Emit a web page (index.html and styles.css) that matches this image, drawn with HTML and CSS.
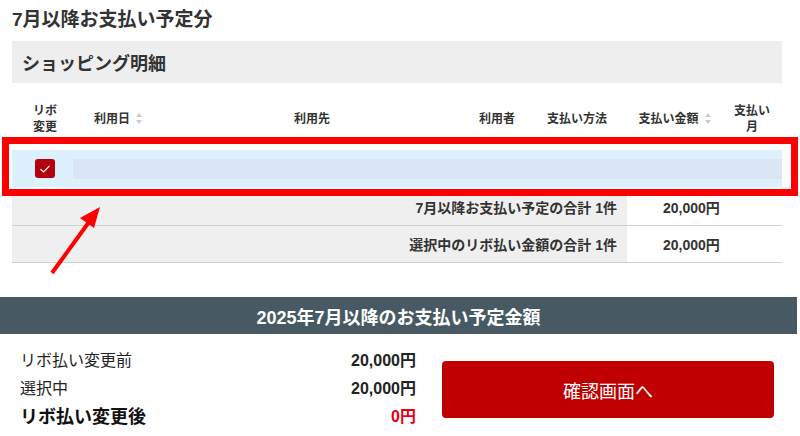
FILE: index.html
```html
<!DOCTYPE html>
<html lang="ja">
<head>
    <meta charset="UTF-8">
    <meta name="viewport" content="width=device-width, initial-scale=1.0">
    <title>お支払い予定</title>
    <link rel="stylesheet" href="styles.css">
</head>
<body>

<div class="page">
    <h2 class="title">7月以降お支払い予定分</h2>
    <div class="section-head">ショッピング明細</div>

    <table class="detail">
        <colgroup>
            <col style="width:66px">
            <col style="width:79px">
            <col style="width:310px">
            <col style="width:60px">
            <col style="width:100px">
            <col style="width:95px">
            <col style="width:60px">
        </colgroup>
        <thead>
            <tr>
                <th>リボ<br>変更</th>
                <th class="left">利用日<span class="sort"></span></th>
                <th>利用先</th>
                <th>利用者</th>
                <th>支払い方法</th>
                <th>支払い金額<span class="sort"></span></th>
                <th>支払い<br>月</th>
            </tr>
        </thead>
        <tbody>
            <tr class="data">
                <td colspan="7">
                    <div class="row-sel">
                        <span class="check">
                            <svg width="12" height="10" viewBox="0 0 12 10"><path d="M1.5 5.2 L4.6 8 L10.5 1.8" fill="none" stroke="#fff" stroke-width="1.2"/></svg>
                        </span>
                        <span class="masked"></span>
                    </div>
                </td>
            </tr>
            <tr class="sum">
                <td colspan="5" class="sum-label">7月以降お支払い予定の合計 1件</td>
                <td colspan="2" class="sum-value">20,000円</td>
            </tr>
            <tr class="sum">
                <td colspan="5" class="sum-label">選択中のリボ払い金額の合計 1件</td>
                <td colspan="2" class="sum-value">20,000円</td>
            </tr>
        </tbody>
    </table>
</div>

<div class="banner">2025年7月以降のお支払い予定金額</div>

<div class="result">
    <div class="totals">
        <div class="total-row"><span>リボ払い変更前</span><b>20,000円</b></div>
        <div class="total-row"><span>選択中</span><b>20,000円</b></div>
        <div class="total-row after"><span>リボ払い変更後</span><b class="zero">0円</b></div>
    </div>
    <button class="confirm" type="button">確認画面へ</button>
</div>

<!-- annotation -->
<div class="mark-box"></div>
<svg class="mark-arrow" width="70" height="80" viewBox="0 0 70 80">
    <line x1="8" y1="75" x2="45" y2="24" stroke="#f00" stroke-width="4"/>
    <polygon points="56,9 36,20 50,30" fill="#f00"/>
</svg>

</body>
</html>
```

FILE: styles.css
```css
body {
    margin: 0;
    background: #fff;
    color: #333;
    font-family: "Liberation Sans", "Noto Sans CJK JP", sans-serif;
    position: relative;
    height: 436px;
    overflow: hidden;
}
.page {
    padding: 0 18px 0 12px;
}
.title {
    margin: 0;
    padding-top: 6px;
    font-size: 19px;
    line-height: 28px;
    font-weight: bold;
    color: #333;
}
.section-head {
    margin-top: 7px;
    height: 42px;
    background: #eeeeee;
    padding: 0 10px;
    display: flex;
    align-items: center;
    font-size: 18px;
    font-weight: bold;
    color: #333;
}
.detail {
    margin-top: 17px;
    width: 770px;
    table-layout: fixed;
    border-collapse: collapse;
}
.detail th {
    height: 38px;
    padding: 0 0 6px;
    font-size: 12px;
    line-height: 16px;
    font-weight: bold;
    color: #333;
    text-align: center;
    vertical-align: middle;
}
.detail th.left {
    text-align: left;
    padding-left: 16px;
}
.sort {
    display: inline-block;
    width: 6px;
    height: 11px;
    margin-left: 6px;
    vertical-align: -1px;
    position: relative;
}
.sort::before,
.sort::after {
    content: "";
    position: absolute;
    left: 0;
    border-left: 3px solid transparent;
    border-right: 3px solid transparent;
}
.sort::before {
    top: 0;
    border-bottom: 4px solid #ccc;
}
.sort::after {
    bottom: 0;
    border-top: 4px solid #ccc;
}
.detail .data td {
    padding: 6px 0 2px;
}
.row-sel {
    height: 37px;
    background: #dcf1fb;
    display: flex;
    align-items: center;
}
.check {
    width: 20px;
    height: 19px;
    margin-left: 23px;
    background: #b5000f;
    border-radius: 3px;
    display: flex;
    align-items: center;
    justify-content: center;
}
.masked {
    flex: 1;
    height: 20px;
    margin-left: 18px;
    background: #dbe6f5;
}
.sum td {
    height: 36px;
    padding: 0;
    border-bottom: 1px solid #d0d0d0;
    font-size: 14px;
    font-weight: bold;
    color: #333;
}
.sum-label {
    background: #efefef;
    text-align: right;
    padding-right: 10px !important;
}
.sum-value {
    padding-left: 36px !important;
}
.banner {
    margin: 34px 3px 0 0;
    height: 37px;
    background: #475a64;
    color: #fff;
    font-size: 18px;
    font-weight: bold;
    display: flex;
    align-items: center;
    justify-content: center;
}
.result {
    display: flex;
    padding: 0 26px 0 20px;
}
.totals {
    width: 396px;
    padding-top: 11px;
}
.total-row {
    height: 28px;
    display: flex;
    align-items: center;
    justify-content: space-between;
    font-size: 16px;
    color: #222;
}
.total-row b {
    font-size: 16px;
    color: #222;
}
.total-row.after span {
    font-size: 18px;
    font-weight: bold;
    color: #111;
}
.total-row b.zero {
    color: #e60012;
}
.confirm {
    margin: 27px 0 0 26px;
    width: 332px;
    height: 57px;
    border: none;
    border-radius: 4px;
    background: #c00000;
    color: #fff;
    font-family: inherit;
    font-size: 18px;
}
.mark-box {
    position: absolute;
    left: 2px;
    top: 137px;
    width: 796px;
    height: 59px;
    box-sizing: border-box;
    border: 7px solid #f00;
}
.mark-arrow {
    position: absolute;
    left: 44px;
    top: 198px;
}
```
